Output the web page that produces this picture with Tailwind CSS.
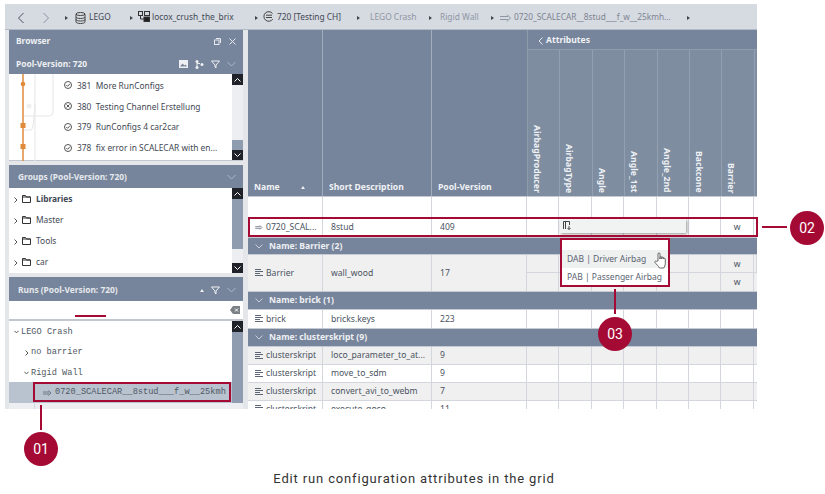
<!DOCTYPE html>
<html><head><meta charset="utf-8"><script src="https://cdn.jsdelivr.net/npm/@tailwindcss/browser@4"></script></head>
<body class="bg-white">
<div class="relative w-[825px] h-[494px] overflow-hidden bg-white font-['Noto_Sans',sans-serif] text-[8.6px] text-[#4a5361]">
  <div class="ml-[5px] pt-[4px] w-[752px]">
    <!-- toolbar -->
    <div class="flex h-[26px] items-center bg-[#d6dae1] border-b border-[#b4bac4] text-[#3f4854] text-[8.4px] whitespace-nowrap pt-[2px]">
      <svg class="ml-[12px] w-[8px] h-[12px]" viewBox="0 0 8 12" fill="none" stroke="#4a5361"><path d="M6.5 1 1.500 6l5 5"/></svg>
      <svg class="ml-[17px] w-[8px] h-[12px]" viewBox="0 0 8 12" fill="none" stroke="#8b94a2"><path d="M1.500 1l5 5-5 5"/></svg>
      <span class="ml-[15px] w-0 h-0 border-y-[2.5px] border-y-transparent border-l-[3px] border-l-[#444]"></span>
      <svg class="ml-[7px] w-[11px] h-[12px]" viewBox="0 0 11 12" fill="none" stroke="#444"><ellipse cx="5.5" cy="2" rx="4.5" ry="1.5"/><path d="M1 2v8c0 .8 2 1.500 4.500 1.500S10 10.800 10 10V2M1 5c0 .8 2 1.500 4.500 1.500S10 5.800 10 5M1 7.500c0 .8 2 1.500 4.500 1.500s4.500-.7 4.500-1.500"/></svg>
      <span class="ml-[3px] w-[23px]">LEGO</span>
      <span class="ml-[18px] w-0 h-0 border-y-[2.5px] border-y-transparent border-l-[3px] border-l-[#444]"></span>
      <svg class="ml-[5px] w-[12px] h-[11px] -mt-[3px]" viewBox="0 0 12 11" fill="none" stroke="#333"><rect x=".5" y=".5" width="4" height="4"/><rect x="6.500" y=".5" width="5" height="4"/><rect x="6" y="6" width="5.500" height="4.500" fill="#222"/><path d="M2.500 5v3H6"/></svg>
      <span class="ml-[2px] w-[83px]">locox_crush_the_brix</span>
      <span class="ml-[20px] w-0 h-0 border-y-[2.5px] border-y-transparent border-l-[3px] border-l-[#444]"></span>
      <svg class="ml-[5px] w-[11px] h-[11px] -mt-[3px]" viewBox="0 0 11 11" fill="none" stroke="#444"><path d="M9.500 2.500A4.800 4.800 0 1 0 9.800 8M3 4.200h6M3 6.500h6"/></svg>
      <span class="ml-[3px] w-[62px]">720 [Testing CH]</span>
      <span class="ml-[18px] w-0 h-0 border-y-[2.5px] border-y-transparent border-l-[3px] border-l-[#444]"></span>
      <span class="ml-[10px] w-[46px] text-[#8e96a3]">LEGO Crash</span>
      <span class="ml-[13px] w-0 h-0 border-y-[2.5px] border-y-transparent border-l-[3px] border-l-[#444]"></span>
      <span class="ml-[8px] w-[39px] text-[#8e96a3]">Rigid Wall</span>
      <span class="ml-[12px] w-0 h-0 border-y-[2.5px] border-y-transparent border-l-[3px] border-l-[#444]"></span>
      <svg class="ml-[6px] w-[11px] h-[8px]" viewBox="0 0 11 8" fill="none" stroke="#8e96a3"><path d="M0 2.500h8M0 5.500h8M7 .5 10.500 4 7 7.500"/></svg>
      <span class="ml-[3px] w-[158px] text-[8.3px] text-[#7d8592]">0720_SCALECAR__8stud___f_w__25kmh...</span>
      <span class="ml-[15px] w-0 h-0 border-y-[2.5px] border-y-transparent border-l-[3px] border-l-[#444]"></span>
    </div>
    <!-- body -->
    <div class="flex h-[379px] bg-[#e4e6ea] pl-[4px]">
      <!-- left -->
      <div class="w-[234px] flex flex-col text-[8.4px]">
        <div class="h-[44px] bg-[#76859b] text-[#eef0f3] font-bold px-[7px]">
          <div class="flex items-center h-[23px] justify-between">
            <span>Browser</span>
            <span class="flex gap-[8px] items-center">
              <svg class="w-[7px] h-[7px]" viewBox="0 0 7 7" fill="none" stroke="#e6e9ee"><rect x=".5" y="2" width="4.500" height="4.500"/><path d="M2 .5h4.500V5"/></svg>
              <svg class="w-[7px] h-[7px]" viewBox="0 0 7 7" fill="none" stroke="#e6e9ee"><path d="M.5.5l6 6M6.500.5l-6 6"/></svg>
            </span>
          </div>
          <div class="flex items-center h-[21px] justify-between pt-[1px]">
            <span>Pool-Version: 720</span>
            <span class="flex gap-[7px] items-center">
              <svg class="w-[9px] h-[8px]" viewBox="0 0 9 8"><rect width="9" height="8" fill="#eef0f3"/><path d="M1 6.500l2.500-3 2 2 1-1 1.500 2z" fill="#76859b"/></svg>
              <svg class="w-[9px] h-[9px]" viewBox="0 0 9 9" fill="#eef0f3"><circle cx="2" cy="1.500" r="1.500"/><circle cx="2" cy="7.500" r="1.500"/><circle cx="7" cy="4.500" r="1.500"/><path d="M1.500 1.500h1v6h-1zM2 3h3v1H2z"/></svg>
              <svg class="w-[9px] h-[9px]" viewBox="0 0 9 9" fill="none" stroke="#eef0f3"><path d="M.5 1h8L5 5v3L4 7V5z"/></svg>
              <svg class="w-[9px] h-[6px]" viewBox="0 0 9 6" fill="none" stroke="#aeb8c6"><path d="M.5 1l4 4 4-4"/></svg>
            </span>
          </div>
        </div>
        <div class="h-[87px] bg-white border-b border-[#c3c8d0] flex">
          <div class="relative w-[223px]">
            <svg class="absolute left-0 top-0 w-[60px] h-[87px]" viewBox="0 0 60 87" fill="none"><path d="M26 0v7q0 49-4 49H14M44 0v38q0 4-4 4H14M26 30v57" stroke="#e6e6e6"/><circle cx="20" cy="32" r="2.500" fill="#efefef"/><path d="M14 0v87" stroke="#e08b3c" stroke-width="1.500"/><circle cx="14" cy="10" r="2.300" fill="#e08b3c"/><rect x="11.500" y="49" width="5" height="5" fill="#e08b3c"/><rect x="11.500" y="70" width="5" height="5" fill="#e08b3c"/></svg>
            <div class="absolute left-[55px] top-[1px] w-[165px] flex flex-col text-[#3f4854] whitespace-nowrap">
              <div class="h-[21px] pt-[1px] flex items-center gap-[5px]"><svg class="w-[8px] h-[8px] -mt-[2px]" viewBox="0 0 8 8" fill="none" stroke="#555"><circle cx="4" cy="4" r="3.500"/><path d="M2.300 4l1.300 1.300 2.300-2.500"/></svg><span>381&nbsp; More RunConfigs</span></div>
              <div class="h-[21px] pt-[1px] flex items-center gap-[5px]"><svg class="w-[8px] h-[8px] -mt-[2px]" viewBox="0 0 8 8" fill="none" stroke="#555"><circle cx="4" cy="4" r="3.500"/><path d="M2.500 2.500l3 3M5.500 2.500l-3 3"/></svg><span>380&nbsp; Testing Channel Erstellung</span></div>
              <div class="h-[21px] flex items-center gap-[5px]"><svg class="w-[8px] h-[8px] -mt-[2px]" viewBox="0 0 8 8" fill="none" stroke="#555"><circle cx="4" cy="4" r="3.500"/><path d="M2.300 4l1.300 1.300 2.300-2.500"/></svg><span>379&nbsp; RunConfigs 4 car2car</span></div>
              <div class="h-[21px] flex items-center gap-[5px]"><svg class="w-[8px] h-[8px] -mt-[2px]" viewBox="0 0 8 8" fill="none" stroke="#555"><circle cx="4" cy="4" r="3.500"/><path d="M2.300 4l1.300 1.300 2.300-2.500"/></svg><span>378&nbsp; fix error in SCALECAR with en...</span></div>
            </div>
          </div>
          <div class="w-[11px] flex flex-col bg-[#eceef1]">
            <div class="h-[11px] bg-[#1f2329] flex items-center justify-center"><svg class="w-[7px] h-[4px]" viewBox="0 0 7 4" fill="none" stroke="#fff"><path d="M.5 3.500l3-3 3 3"/></svg></div>
            <div class="flex-1"></div>
            <div class="h-[10px] bg-[#8f9cb0]"></div>
            <div class="h-[10px] bg-[#1f2329] flex items-center justify-center"><svg class="w-[7px] h-[4px]" viewBox="0 0 7 4" fill="none" stroke="#fff"><path d="M.5.5l3 3 3-3"/></svg></div>
          </div>
        </div>
        <div class="h-[4px]"></div>
        <div class="h-[23px] bg-[#76859b] text-[#e6e9ee] font-bold pl-[9px] pr-[7px] pt-[1px] flex items-center justify-between">
          <span>Groups (Pool-Version: 720)</span>
          <svg class="w-[9px] h-[6px]" viewBox="0 0 9 6" fill="none" stroke="#aeb8c6"><path d="M.5 1l4 4 4-4"/></svg>
        </div>
        <div class="h-[85px] bg-white flex">
          <div class="w-[223px] flex flex-col text-[#3f4854] pl-[5px] pt-[1px]">
            <div class="h-[21px] flex items-center font-bold"><svg class="w-[4px] h-[6px] mr-[4px]" viewBox="0 0 4 6" fill="none" stroke="#555"><path d="M.5.5l2.500 2.500-2.500 2.500"/></svg><svg class="w-[9px] h-[8px] mr-[5px] -mt-[2px]" viewBox="0 0 9 8" fill="none" stroke="#333"><path d="M.5 7.500V.5h3l1 1.500h4v5.500zM.5 2h8"/></svg>Libraries</div>
            <div class="h-[21px] flex items-center"><svg class="w-[4px] h-[6px] mr-[4px]" viewBox="0 0 4 6" fill="none" stroke="#555"><path d="M.5.5l2.500 2.500-2.500 2.500"/></svg><svg class="w-[9px] h-[8px] mr-[5px] -mt-[2px]" viewBox="0 0 9 8" fill="none" stroke="#333"><path d="M.5 7.500V.5h3l1 1.500h4v5.500zM.5 2h8"/></svg>Master</div>
            <div class="h-[21px] flex items-center"><svg class="w-[4px] h-[6px] mr-[4px]" viewBox="0 0 4 6" fill="none" stroke="#555"><path d="M.5.5l2.500 2.500-2.500 2.500"/></svg><svg class="w-[9px] h-[8px] mr-[5px] -mt-[2px]" viewBox="0 0 9 8" fill="none" stroke="#333"><path d="M.5 7.500V.5h3l1 1.500h4v5.500zM.5 2h8"/></svg>Tools</div>
            <div class="h-[21px] flex items-center"><svg class="w-[4px] h-[6px] mr-[4px]" viewBox="0 0 4 6" fill="none" stroke="#555"><path d="M.5.5l2.500 2.500-2.500 2.500"/></svg><svg class="w-[9px] h-[8px] mr-[5px] -mt-[2px]" viewBox="0 0 9 8" fill="none" stroke="#333"><path d="M.5 7.500V.5h3l1 1.500h4v5.500zM.5 2h8"/></svg>car</div>
          </div>
          <div class="w-[11px] flex flex-col bg-[#eceef1]">
            <div class="h-[11px] bg-[#1f2329] flex items-center justify-center"><svg class="w-[7px] h-[4px]" viewBox="0 0 7 4" fill="none" stroke="#fff"><path d="M.5 3.500l3-3 3 3"/></svg></div>
            <div class="h-[50px] bg-[#8f9cb0]"></div>
            <div class="flex-1"></div>
            <div class="h-[10px] bg-[#1f2329] flex items-center justify-center"><svg class="w-[7px] h-[4px]" viewBox="0 0 7 4" fill="none" stroke="#fff"><path d="M.5.5l3 3 3-3"/></svg></div>
          </div>
        </div>
        <div class="h-[4px]"></div>
        <div class="h-[24px] bg-[#76859b] text-[#e6e9ee] font-bold pl-[9px] pr-[7px] pt-[2px] flex items-center justify-between">
          <span>Runs (Pool-Version: 720)</span>
          <span class="flex gap-[7px] items-center">
            <span class="w-0 h-0 border-x-[2.5px] border-x-transparent border-b-[3px] border-b-[#eef0f3]"></span>
            <svg class="w-[9px] h-[9px]" viewBox="0 0 9 9" fill="none" stroke="#eef0f3"><path d="M.5 1h8L5 5v3L4 7V5z"/></svg>
            <svg class="w-[9px] h-[6px]" viewBox="0 0 9 6" fill="none" stroke="#aeb8c6"><path d="M.5 1l4 4 4-4"/></svg>
          </span>
        </div>
        <div class="h-[18px] bg-white relative">
          <div class="absolute left-[66px] top-[14px] w-[31px] h-[2px] bg-[#a50a34]"></div>
          <svg class="absolute right-[3px] top-[5px] w-[10px] h-[8px]" viewBox="0 0 10 8"><path d="M3 0h7v8H3L0 4z" fill="#7b7f86"/><path d="M5 2.500l3 3M8 2.500l-3 3" stroke="#fff"/></svg>
        </div>
        <div class="h-[2px] bg-[#c3c8d0]"></div>
        <div class="h-[82px] bg-white flex font-['Liberation_Mono',monospace] text-[8.65px] text-[#4f5864]">
          <div class="w-[223px] flex flex-col">
            <div class="h-[20px] flex items-center pl-[5px] pt-[2px]"><svg class="w-[5px] h-[4px] mr-[2px]" viewBox="0 0 5 4" fill="none" stroke="#555"><path d="M.3.7l2.200 2.200L4.700.7"/></svg>LEGO Crash</div>
            <div class="h-[21px] flex items-center pl-[16px] pt-[2px]"><svg class="w-[4px] h-[6px] mr-[2px]" viewBox="0 0 4 6" fill="none" stroke="#555"><path d="M.5.5l2.500 2.500-2.500 2.500"/></svg>no barrier</div>
            <div class="h-[20px] flex items-center pl-[15px] pt-[2px]"><svg class="w-[5px] h-[4px] mr-[2px]" viewBox="0 0 5 4" fill="none" stroke="#555"><path d="M.3.7l2.200 2.200L4.700.7"/></svg>Rigid Wall</div>
            <div class="h-[21px] bg-[#b9c3cf] flex items-center pl-[34px] whitespace-nowrap"><svg class="w-[9px] h-[6px] mr-[3px]" viewBox="0 0 9 6" fill="none" stroke="#6f7886"><path d="M0 2h6.500M0 4h6.500M5.500.5 8 3 5.500 5.500"/></svg>0720_SCALECAR__8stud___f_w__25kmh</div>
          </div>
          <div class="w-[11px] flex flex-col bg-[#8f9cb0]">
            <div class="h-[11px] bg-[#1f2329] flex items-center justify-center"><svg class="w-[7px] h-[4px]" viewBox="0 0 7 4" fill="none" stroke="#fff"><path d="M.5 3.500l3-3 3 3"/></svg></div>
          </div>
        </div>
        <div class="h-[6px] bg-[#eceef1] flex"><div class="w-[26px] border-r border-[#d5d9df]"></div></div>
      </div>
      <div class="w-[5px]"></div>
      <!-- grid -->
      <div class="w-[509px] flex flex-col text-[#4a5361]">
        <!-- header -->
        <div class="h-[167px] flex bg-[#76859b] border-b border-[#c6cbd3] text-[#f0f2f5] font-bold">
          <div class="w-[75px] border-r border-[#a3adbb] flex items-end justify-between pl-[6px] pr-[17px] pb-[2px]"><span>Name</span><span class="w-0 h-0 mb-[5px] border-x-[2.5px] border-x-transparent border-b-[3px] border-b-[#eef0f3]"></span></div>
          <div class="w-[109px] border-r border-[#a3adbb] flex items-end pl-[6px] pb-[2px]">Short Description</div>
          <div class="w-[95px] flex items-end pl-[6px] pb-[2px]">Pool-Version</div>
          <div class="w-[230px] flex flex-col border-l border-[#8f9cae]">
            <div class="h-[20px] flex items-center pl-[10px] pt-[2px] gap-[3px] border-b border-[#8f9cae]"><svg class="w-[5px] h-[8px]" viewBox="0 0 5 8" fill="none" stroke="#e6e9ee"><path d="M4.500.5 1 4l3.500 3.500"/></svg>Attributes</div>
            <div class="flex-1 bg-[#7e8da0] grid grid-cols-[repeat(7,32.400px)_1fr] divide-x divide-[#93a0b1] leading-[12px] text-[8.7px]">
              <div class="flex items-end pl-[3px] pb-[3px]"><span class="[writing-mode:vertical-rl]">AirbagProducer</span></div>
              <div class="flex items-end pl-[3px] pb-[3px]"><span class="[writing-mode:vertical-rl]">AirbagType</span></div>
              <div class="flex items-end pl-[3px] pb-[3px]"><span class="[writing-mode:vertical-rl]">Angle</span></div>
              <div class="flex items-end pl-[3px] pb-[3px]"><span class="[writing-mode:vertical-rl]">Angle_1st</span></div>
              <div class="flex items-end pl-[3px] pb-[3px]"><span class="[writing-mode:vertical-rl]">Angle_2nd</span></div>
              <div class="flex items-end pl-[3px] pb-[3px]"><span class="[writing-mode:vertical-rl]">Backcone</span></div>
              <div class="flex items-end pl-[3px] pb-[3px]"><span class="[writing-mode:vertical-rl]">Barrier</span></div>
              <div></div>
            </div>
          </div>
        </div>
        <!-- blank row -->
        <div class="h-[21px] bg-white border-b border-[#d3d7dd] grid grid-cols-[75px_109px_95px_repeat(7,32.400px)_1fr] divide-x divide-[#d3d7dd]"><div></div><div></div><div></div><div></div><div></div><div></div><div></div><div></div><div></div><div></div><div></div></div>
        <!-- selected row -->
        <div class="h-[19px] bg-white grid grid-cols-[75px_109px_95px_repeat(7,32.400px)_1fr] divide-x divide-[#d3d7dd] items-stretch leading-[19px]">
          <div class="pl-[7px] flex items-center"><svg class="w-[8px] h-[5px] mr-[3px]" viewBox="0 0 9 6" fill="none" stroke="#6f7886"><path d="M0 2h6.500M0 4h6.500M5.500.5 8 3 5.500 5.500"/></svg>0720_SCAL...</div>
          <div class="pl-[8px]">8stud</div><div class="pl-[8px]">409</div>
          <div></div><div></div><div></div><div></div><div></div><div></div>
          <div class="text-center">w</div><div></div>
        </div>
        <!-- group -->
        <div class="h-[18px] bg-[#76859b] text-[#eef0f3] font-bold flex items-center border-y border-[#c6cbd3] pl-[7px]"><svg class="w-[8px] h-[5px] mr-[6px]" viewBox="0 0 8 5" fill="none" stroke="#c7cfda"><path d="M.5.5 4 4 7.500.5"/></svg>Name: Barrier (2)</div>
        <div class="h-[36px] bg-[#f0f0f0] grid grid-cols-[75px_109px_95px_repeat(7,32.400px)_1fr] grid-rows-2 divide-x divide-[#d3d7dd]">
          <div class="row-span-2 pl-[7px] flex items-center"><svg class="w-[8px] h-[8px] mr-[3px]" viewBox="0 0 8 8" stroke="#5d6674"><path d="M0 .5h6M0 2.500h8M0 4.500h5M0 6.500h8"/></svg>Barrier</div>
          <div class="row-span-2 pl-[8px] flex items-center">wall_wood</div>
          <div class="row-span-2 pl-[8px] flex items-center">17</div>
          <div class="border-b border-[#d3d7dd]"></div><div class="border-b border-[#d3d7dd]"></div><div class="border-b border-[#d3d7dd]"></div><div class="border-b border-[#d3d7dd]"></div><div class="border-b border-[#d3d7dd]"></div><div class="border-b border-[#d3d7dd]"></div><div class="border-b border-[#d3d7dd] text-center leading-[19px]">w</div><div class="border-b border-[#d3d7dd]"></div>
          <div></div><div></div><div></div><div></div><div></div><div></div><div class="text-center leading-[19px]">w</div><div></div>
        </div>
        <div class="h-[19px] bg-[#76859b] text-[#eef0f3] font-bold flex items-center border-y border-[#c6cbd3] pl-[7px]"><svg class="w-[8px] h-[5px] mr-[6px]" viewBox="0 0 8 5" fill="none" stroke="#c7cfda"><path d="M.5.5 4 4 7.500.5"/></svg>Name: brick (1)</div>
        <div class="h-[18px] bg-white grid grid-cols-[75px_109px_95px_repeat(7,32.400px)_1fr] divide-x divide-[#d3d7dd] leading-[18px]">
          <div class="pl-[7px] flex items-center"><svg class="w-[8px] h-[8px] mr-[3px]" viewBox="0 0 8 8" stroke="#5d6674"><path d="M0 .5h6M0 2.500h8M0 4.500h5M0 6.500h8"/></svg>brick</div>
          <div class="pl-[8px]">bricks.keys</div><div class="pl-[8px]">223</div><div></div><div></div><div></div><div></div><div></div><div></div><div></div><div></div>
        </div>
        <div class="h-[19px] bg-[#76859b] text-[#eef0f3] font-bold flex items-center border-y border-[#c6cbd3] pl-[7px]"><svg class="w-[8px] h-[5px] mr-[6px]" viewBox="0 0 8 5" fill="none" stroke="#c7cfda"><path d="M.5.5 4 4 7.500.5"/></svg>Name: clusterskript (9)</div>
        <div class="h-[18px] bg-[#f0f0f0] border-b border-[#d3d7dd] grid grid-cols-[75px_109px_95px_repeat(7,32.400px)_1fr] divide-x divide-[#d3d7dd] leading-[17px]">
          <div class="pl-[7px] flex items-center"><svg class="w-[8px] h-[8px] mr-[3px]" viewBox="0 0 8 8" stroke="#5d6674"><path d="M0 .5h6M0 2.500h8M0 4.500h5M0 6.500h8"/></svg>clusterskript</div>
          <div class="pl-[8px]">loco_parameter_to_at...</div><div class="pl-[8px]">9</div><div></div><div></div><div></div><div></div><div></div><div></div><div></div><div></div>
        </div>
        <div class="h-[18px] bg-white border-b border-[#d3d7dd] grid grid-cols-[75px_109px_95px_repeat(7,32.400px)_1fr] divide-x divide-[#d3d7dd] leading-[17px]">
          <div class="pl-[7px] flex items-center"><svg class="w-[8px] h-[8px] mr-[3px]" viewBox="0 0 8 8" stroke="#5d6674"><path d="M0 .5h6M0 2.500h8M0 4.500h5M0 6.500h8"/></svg>clusterskript</div>
          <div class="pl-[8px]">move_to_sdm</div><div class="pl-[8px]">9</div><div></div><div></div><div></div><div></div><div></div><div></div><div></div><div></div>
        </div>
        <div class="h-[18px] bg-[#f0f0f0] border-b border-[#d3d7dd] grid grid-cols-[75px_109px_95px_repeat(7,32.400px)_1fr] divide-x divide-[#d3d7dd] leading-[17px]">
          <div class="pl-[7px] flex items-center"><svg class="w-[8px] h-[8px] mr-[3px]" viewBox="0 0 8 8" stroke="#5d6674"><path d="M0 .5h6M0 2.500h8M0 4.500h5M0 6.500h8"/></svg>clusterskript</div>
          <div class="pl-[8px]">convert_avi_to_webm</div><div class="pl-[8px]">7</div><div></div><div></div><div></div><div></div><div></div><div></div><div></div><div></div>
        </div>
        <div class="flex-1 min-h-0 overflow-hidden bg-white grid grid-cols-[75px_109px_95px_repeat(7,32.400px)_1fr] divide-x divide-[#d3d7dd] leading-[17px]">
          <div class="pl-[7px] flex items-start pt-[4px]"><svg class="w-[8px] h-[8px] mr-[3px]" viewBox="0 0 8 8" stroke="#5d6674"><path d="M0 .5h6M0 2.500h8M0 4.500h5M0 6.500h8"/></svg><span class="-mt-[4px]">clusterskript</span></div>
          <div class="pl-[8px]">execute_goco</div><div class="pl-[8px]">11</div><div></div><div></div><div></div><div></div><div></div><div></div><div></div><div></div>
        </div>
      </div>
    </div>
  </div>
  <!-- caption -->
  <div class="mt-[60px] pl-[3px] text-center text-[13px] tracking-[0.85px] text-[#333] font-['Roboto',sans-serif]">Edit run configuration attributes in the grid</div>

  <!-- overlays -->
  <div class="absolute left-[560px] top-[219px] w-[126px] h-[14px] bg-[#f1f2f2] shadow-[1px_1px_3px_rgba(0,0,0,.45)]">
    <svg class="ml-[3px] mt-[2px] w-[9px] h-[9px]" viewBox="0 0 9 9" fill="none" stroke="#444"><path d="M.5 8V.5h6V4M2.500 1v7M6 5v3.500M4.500 7 6 8.500 7.500 7"/></svg>
  </div>
  <div class="absolute left-[560px] top-[238px] w-[110px] h-[49px] bg-white border-[2px] border-[#a50a34] pt-[10px] text-[8.5px] text-[#596270] whitespace-nowrap">
    <div class="h-[18px] bg-[#eff0f0] pl-[5px] leading-[18px]">DAB | Driver Airbag</div>
    <div class="h-[17px] pl-[5px] leading-[17px]">PAB | Passenger Airbag</div>
  </div>
  <svg class="absolute left-[654px] top-[252px] w-[13px] h-[17px]" viewBox="0 0 13 17" fill="#fff" stroke="#444" stroke-width=".8"><path d="M4 9V2c0-1.500 2-1.500 2 0v5-1.500c0-1.200 1.800-1.200 1.800 0V7 6c0-1.200 1.800-1.200 1.800 0v1c0-1 1.700-1 1.700 0v4.500c0 2-1 3-1.500 4.500H5.500C4.500 14 2.500 12.500 1 10.500c-.7-1 .6-2 1.500-1.200z"/></svg>
  <div class="absolute left-[248px] top-[217px] w-[510px] h-[20px] border-[2px] border-[#a50a34]"></div>
  <div class="absolute left-[33px] top-[382px] w-[198px] h-[20px] border-[2px] border-[#a50a34]"></div>
  <div class="absolute left-[40px] top-[405px] w-[2px] h-[25px] bg-[#a50a34]"></div>
  <div class="absolute left-[24px] top-[432px] w-[34px] h-[34px] rounded-full bg-[#a50a34] text-white text-[14px] font-['Roboto',sans-serif] flex items-center justify-center">01</div>
  <div class="absolute left-[762px] top-[226px] w-[25px] h-[2px] bg-[#a50a34]"></div>
  <div class="absolute left-[790px] top-[211px] w-[34px] h-[34px] rounded-full bg-[#a50a34] text-white text-[14px] font-['Roboto',sans-serif] flex items-center justify-center">02</div>
  <div class="absolute left-[614px] top-[289px] w-[2px] h-[25px] bg-[#a50a34]"></div>
  <div class="absolute left-[598px] top-[317px] w-[34px] h-[34px] rounded-full bg-[#a50a34] text-white text-[14px] font-['Roboto',sans-serif] flex items-center justify-center">03</div>
</div>
</body></html>
